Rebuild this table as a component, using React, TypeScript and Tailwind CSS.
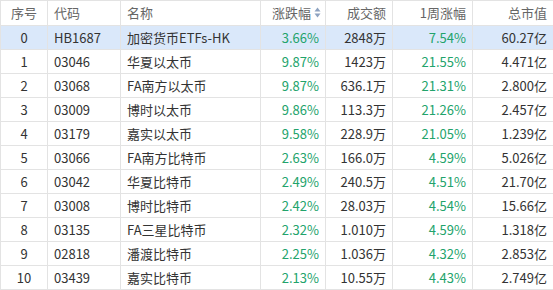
const rows = [
  ["0", "HB1687", "加密货币ETFs-HK", "3.66%", "2848万", "7.54%", "60.27亿"],
  ["1", "03046", "华夏以太币", "9.87%", "1423万", "21.55%", "4.471亿"],
  ["2", "03068", "FA南方以太币", "9.87%", "636.1万", "21.31%", "2.800亿"],
  ["3", "03009", "博时以太币", "9.86%", "113.3万", "21.26%", "2.457亿"],
  ["4", "03179", "嘉实以太币", "9.58%", "228.9万", "21.05%", "1.239亿"],
  ["5", "03066", "FA南方比特币", "2.63%", "166.0万", "4.59%", "5.026亿"],
  ["6", "03042", "华夏比特币", "2.49%", "240.5万", "4.51%", "21.70亿"],
  ["7", "03008", "博时比特币", "2.42%", "28.03万", "4.54%", "15.66亿"],
  ["8", "03135", "FA三星比特币", "2.32%", "1.010万", "4.59%", "1.318亿"],
  ["9", "02818", "潘渡比特币", "2.25%", "1.036万", "4.32%", "2.853亿"],
  ["10", "03439", "嘉实比特币", "2.13%", "10.55万", "4.43%", "2.749亿"],
]

const SortIcon = () => (
  <svg width="7" height="11" viewBox="0 0 7 11" className="ml-[3px] inline-block">
    <path d="M3.5 0.5 L6.5 4.5 L0.5 4.5 Z" fill="#8da2c0" />
    <path d="M3.5 10.5 L6.5 6.5 L0.5 6.5 Z" fill="#8da2c0" />
  </svg>
)

const App = () => {
  const th = "h-[25px] border border-[#e3e3e3] px-[6px] pb-[1px] font-normal text-[#666]"
  const td = "h-[24px] border border-[#e3e3e3] px-[6px] pb-[1px] whitespace-nowrap"

  return (
    <div className="w-[553px] h-[290px] overflow-hidden bg-white font-['Microsoft_YaHei','Noto_Sans_CJK_SC',sans-serif] text-[13px] leading-none">
      <table className="table-fixed border-collapse w-[553px]">
        <colgroup>
          <col className="w-[47px]" />
          <col className="w-[73px]" />
          <col className="w-[140px]" />
          <col className="w-[65px]" />
          <col className="w-[67px]" />
          <col className="w-[80px]" />
          <col className="w-[81px]" />
        </colgroup>
        <thead>
          <tr>
            <th className={th + " text-center"}>序号</th>
            <th className={th + " text-left"}>代码</th>
            <th className={th + " text-left"}>名称</th>
            <th className={th + " text-right pr-[4px]"}>
              <span className="inline-flex items-center">涨跌幅<SortIcon /></span>
            </th>
            <th className={th + " text-right"}>成交额</th>
            <th className={th + " text-right"}>1周涨幅</th>
            <th className={th + " text-right"}>总市值</th>
          </tr>
        </thead>
        <tbody>
          {rows.map((r, i) => (
            <tr key={r[0]} className={i === 0 ? "bg-[#dae8fa]" : ""}>
              <td className={td + " text-center text-[#333]"}>{r[0]}</td>
              <td className={td + " text-left text-[#333]"}>{r[1]}</td>
              <td className={td + " text-left text-[#333]"}>{r[2]}</td>
              <td className={td + " text-right text-[#22a36b]"}>{r[3]}</td>
              <td className={td + " text-right text-[#333]"}>{r[4]}</td>
              <td className={td + " text-right text-[#22a36b]"}>{r[5]}</td>
              <td className={td + " text-right text-[#333]"}>{r[6]}</td>
            </tr>
          ))}
        </tbody>
      </table>
    </div>
  )
}

export default App
